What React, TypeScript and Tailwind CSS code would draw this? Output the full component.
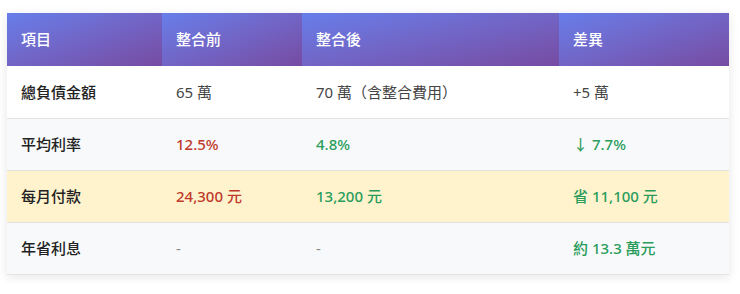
import React from 'react';

type Cell = { text: string; tone?: 'red' | 'green' | 'muted' };

interface Row {
  label: string;
  bg: string;
  cells: Cell[];
}

const headers = ['項目', '整合前', '整合後', '差異'];

const rows: Row[] = [
  {
    label: '總負債金額',
    bg: 'bg-white',
    cells: [{ text: '65 萬' }, { text: '70 萬（含整合費用）' }, { text: '+5 萬' }]
  },
  {
    label: '平均利率',
    bg: 'bg-[#f8f9fa]',
    cells: [
      { text: '12.5%', tone: 'red' },
      { text: '4.8%', tone: 'green' },
      { text: '↓ 7.7%', tone: 'green' }
    ]
  },
  {
    label: '每月付款',
    bg: 'bg-[#fff3cd]',
    cells: [
      { text: '24,300 元', tone: 'red' },
      { text: '13,200 元', tone: 'green' },
      { text: '省 11,100 元', tone: 'green' }
    ]
  },
  {
    label: '年省利息',
    bg: 'bg-[#f8f9fa]',
    cells: [
      { text: '-', tone: 'muted' },
      { text: '-', tone: 'muted' },
      { text: '約 13.3 萬元', tone: 'green' }
    ]
  }
];

const toneClass = (tone?: Cell['tone']) => {
  if (tone === 'red') return 'text-[#c0392b] font-medium';
  if (tone === 'green') return 'text-[#2a9d5c] font-medium';
  if (tone === 'muted') return 'text-[#888]';
  return 'text-[#444]';
};

const widths = ['w-[155px]', 'w-[140px]', 'w-[257px]', 'w-[170px]'];

export default function App() {
  return (
    <div className="min-h-[294px] bg-white pt-[13px] pl-[7px] font-['Noto_Sans','Noto_Sans_CJK_TC',sans-serif]">
      <table className="w-[722px] border-collapse text-[15px] shadow-[0_2px_10px_rgba(0,0,0,0.1)]">
        <thead>
          <tr>
            {headers.map((h, i) => (
              <th
                key={h}
                className={`${widths[i]} h-[53px] px-[14px] text-left font-medium text-white bg-gradient-to-br from-[#667eea] to-[#764ba2]`}
              >
                {h}
              </th>
            ))}
          </tr>
        </thead>
        <tbody>
          {rows.map((row) => (
            <tr key={row.label} className={`${row.bg} border-b border-[#e3e3e3]`}>
              <td className="h-[52px] px-[14px] font-medium text-[#222]">{row.label}</td>
              {row.cells.map((c, i) => (
                <td key={i} className={`px-[14px] ${toneClass(c.tone)}`}>
                  {c.text}
                </td>
              ))}
            </tr>
          ))}
        </tbody>
      </table>
    </div>
  );
}
